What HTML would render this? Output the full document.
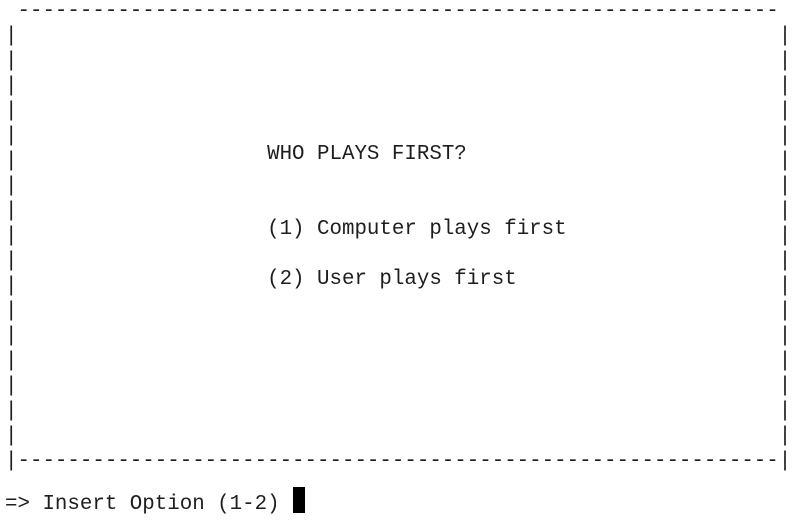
<!DOCTYPE html>
<html><head><meta charset="utf-8"><style>
html,body{margin:0;padding:0;background:#fff;width:799px;height:530px;overflow:hidden}
pre{position:absolute;left:5px;top:-1px;margin:0;font-family:"Liberation Mono",monospace;font-size:20.8px;line-height:25px;color:#1e1e1e;letter-spacing:0}
.t{position:relative;top:-7px}
.cur{position:absolute;left:293px;top:487px;width:12px;height:26px;background:#000}
</style></head><body>
<pre> -------------------------------------------------------------
|                                                             |
|                                                             |
|                                                             |
|                                                             |
|                                                             |
|                    <span class="t">WHO PLAYS FIRST?</span>                         |
|                                                             |
|                                                             |
|                    <span class="t">(1) Computer plays first</span>                 |
|                                                             |
|                    <span class="t">(2) User plays first</span>                     |
|                                                             |
|                                                             |
|                                                             |
|                                                             |
|                                                             |
|                                                             |
|-------------------------------------------------------------|

<span class="t">=&gt; Insert Option (1-2) </span></pre>
<div class="cur"></div>
</body></html>
